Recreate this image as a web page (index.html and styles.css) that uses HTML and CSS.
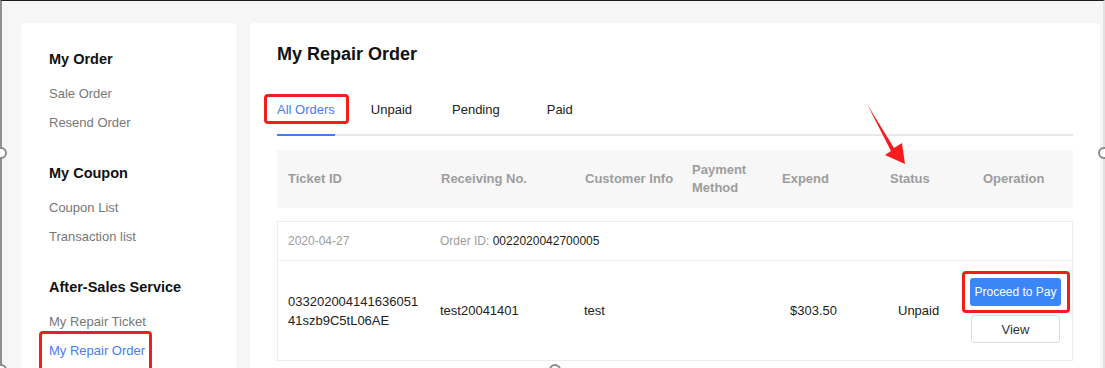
FILE: index.html
```html
<!DOCTYPE html>
<html lang="en">
<head>
    <meta charset="UTF-8">
    <meta name="viewport" content="width=device-width, initial-scale=1.0">
    <title>My Repair Order</title>
    <link rel="stylesheet" href="styles.css">
</head>
<body>
    <div class="page">
        <aside class="side">
            <div class="side-group">
                <h3>My Order</h3>
                <ul>
                    <li><a>Sale Order</a></li>
                    <li><a>Resend Order</a></li>
                </ul>
            </div>
            <div class="side-group">
                <h3>My Coupon</h3>
                <ul>
                    <li><a>Coupon List</a></li>
                    <li><a>Transaction list</a></li>
                </ul>
            </div>
            <div class="side-group">
                <h3>After-Sales Service</h3>
                <ul>
                    <li><a>My Repair Ticket</a></li>
                    <li><a class="current mark">My Repair Order</a></li>
                </ul>
            </div>
        </aside>

        <main class="panel">
            <h2 class="title">My Repair Order</h2>

            <div class="tabs">
                <span class="tab active mark">All Orders</span>
                <span class="tab">Unpaid</span>
                <span class="tab">Pending</span>
                <span class="tab">Paid</span>
            </div>

            <div class="grid thead">
                <div>Ticket ID</div>
                <div>Receiving No.</div>
                <div>Customer Info</div>
                <div>Payment Method</div>
                <div>Expend</div>
                <div>Status</div>
                <div>Operation</div>
            </div>

            <div class="order">
                <div class="order-top">
                    <span class="date">2020-04-27</span>
                    <span class="oid">Order ID: <b>0022020042700005</b></span>
                </div>
                <div class="grid order-row">
                    <div class="ticket">033202004141636051<br>41szb9C5tL06AE</div>
                    <div>test20041401</div>
                    <div>test</div>
                    <div></div>
                    <div class="shift">$303.50</div>
                    <div class="shift">Unpaid</div>
                    <div class="ops">
                        <button class="btn btn-pay mark">Proceed to Pay</button>
                        <button class="btn btn-view">View</button>
                    </div>
                </div>
            </div>
        </main>
    </div>

    <!-- annotation layer: arrow and screenshot handles -->
    <svg class="overlay" width="1105" height="368" viewBox="0 0 1105 368">
        <polygon points="867,104 894,148 902,143 905,164 885,155 891,151" fill="#f41c1c"/>
        <circle cx="1" cy="153" r="5" fill="#fff" stroke="#8a8a8a" stroke-width="2"/>
        <circle cx="1104" cy="153" r="5" fill="#fff" stroke="#8a8a8a" stroke-width="2"/>
        <circle cx="555" cy="370" r="5" fill="#fff" stroke="#8a8a8a" stroke-width="2"/>
        <circle cx="1" cy="370" r="5" fill="#fff" stroke="#8a8a8a" stroke-width="2"/>
    </svg>
</body>
</html>
```

FILE: styles.css
```css
body {
    margin: 0;
    height: 368px;
    overflow: hidden;
    background: #f6f6f6;
    font-family: "Liberation Sans", Arial, sans-serif;
    color: #333;
}
.page {
    display: flex;
    gap: 14px;
    height: 368px;
    box-sizing: border-box;
    border-top: 1px solid #1c1c1c;
    border-left: 2px solid #8f8f8f;
    border-right: 2px solid #e2e2e2;
    padding: 22px 3px 0 19px;
}
.side {
    width: 215px;
    flex: none;
    background: #fff;
    border-radius: 4px 4px 0 0;
    padding: 26px 0 0 28px;
    box-sizing: border-box;
}
.side-group {
    margin-bottom: 26px;
}
.side-group h3 {
    margin: 0;
    font-size: 14.5px;
    line-height: 20px;
    font-weight: bold;
    color: #111;
}
.side-group ul {
    list-style: none;
    margin: 10px 0 0;
    padding: 0;
}
.side-group li {
    font-size: 13px;
    line-height: 29px;
    color: #777;
}
.side-group a.current {
    color: #4a7cf3;
}
.mark {
    position: relative;
}
.mark::after {
    content: "";
    position: absolute;
    border: 3px solid #f31d1d;
    border-radius: 4px;
}
.side-group a.mark {
    display: inline-block;
}
.side-group a.mark::after {
    left: -10px;
    right: -7px;
    top: -5px;
    bottom: -8px;
}
.panel {
    flex: 1;
    background: #fff;
    border-radius: 4px 4px 0 0;
    padding: 19px 27px 0;
}
.title {
    margin: 0;
    font-size: 18px;
    line-height: 24px;
    font-weight: bold;
    color: #111;
}
.tabs {
    display: flex;
    margin-top: 24px;
    border-bottom: 2px solid #e8e8e8;
}
.tab {
    height: 44px;
    line-height: 40px;
    font-size: 13px;
    color: #222;
    box-sizing: border-box;
}
.tab:nth-child(1) { margin-right: 36px; }
.tab:nth-child(2) { margin-right: 40px; }
.tab:nth-child(3) { margin-right: 47px; }
.tab.active {
    color: #4a7cf3;
    border-bottom: 2px solid #3f7df5;
    margin-bottom: -2px;
    height: 46px;
}
.tab.mark::after {
    left: -13px;
    right: -14px;
    top: 4px;
    bottom: 10px;
}
.grid {
    display: grid;
    grid-template-columns: 153px 144px 107px 90px 108px 93px 1fr;
    align-items: center;
}
.thead {
    margin-top: 14px;
    height: 58px;
    background: #f7f7f7;
    font-size: 13px;
    line-height: 18px;
    font-weight: bold;
    color: #9d9d9d;
}
.thead div {
    padding-left: 11px;
}
.order {
    margin-top: 13px;
    border: 1px solid #ececec;
}
.order-top {
    display: grid;
    grid-template-columns: 152px 1fr;
    align-items: center;
    height: 38px;
    border-bottom: 1px solid #f0f0f0;
    font-size: 12px;
    color: #9d9d9d;
}
.order-top span {
    padding-left: 10px;
}
.order-top b {
    font-weight: normal;
    color: #222;
}
.order-row {
    grid-template-columns: 152px 144px 107px 90px 108px 93px 1fr;
    min-height: 99px;
    font-size: 13px;
    color: #222;
}
.order-row div {
    padding-left: 10px;
}
.order-row .ticket {
    line-height: 19px;
}
.order-row .shift {
    padding-left: 19px;
}
.order-row .ops {
    display: flex;
    flex-direction: column;
    gap: 9px;
    padding-left: 0;
    margin-left: -2px;
    width: 91px;
}
.btn {
    height: 28px;
    font-family: inherit;
    font-size: 13px;
    border-radius: 3px;
    padding: 0;
    cursor: pointer;
}
.btn-pay {
    background: #3a86f7;
    color: #fff;
    border: none;
    font-size: 12px;
}
.btn-pay::after {
    left: -8px;
    right: -9px;
    top: -7px;
    bottom: -7px;
}
.btn-view {
    background: #fff;
    color: #333;
    border: 1px solid #dcdcdc;
    width: 89px;
    margin-left: 1px;
}
.overlay {
    position: absolute;
    top: 0;
    left: 0;
    pointer-events: none;
}
```
